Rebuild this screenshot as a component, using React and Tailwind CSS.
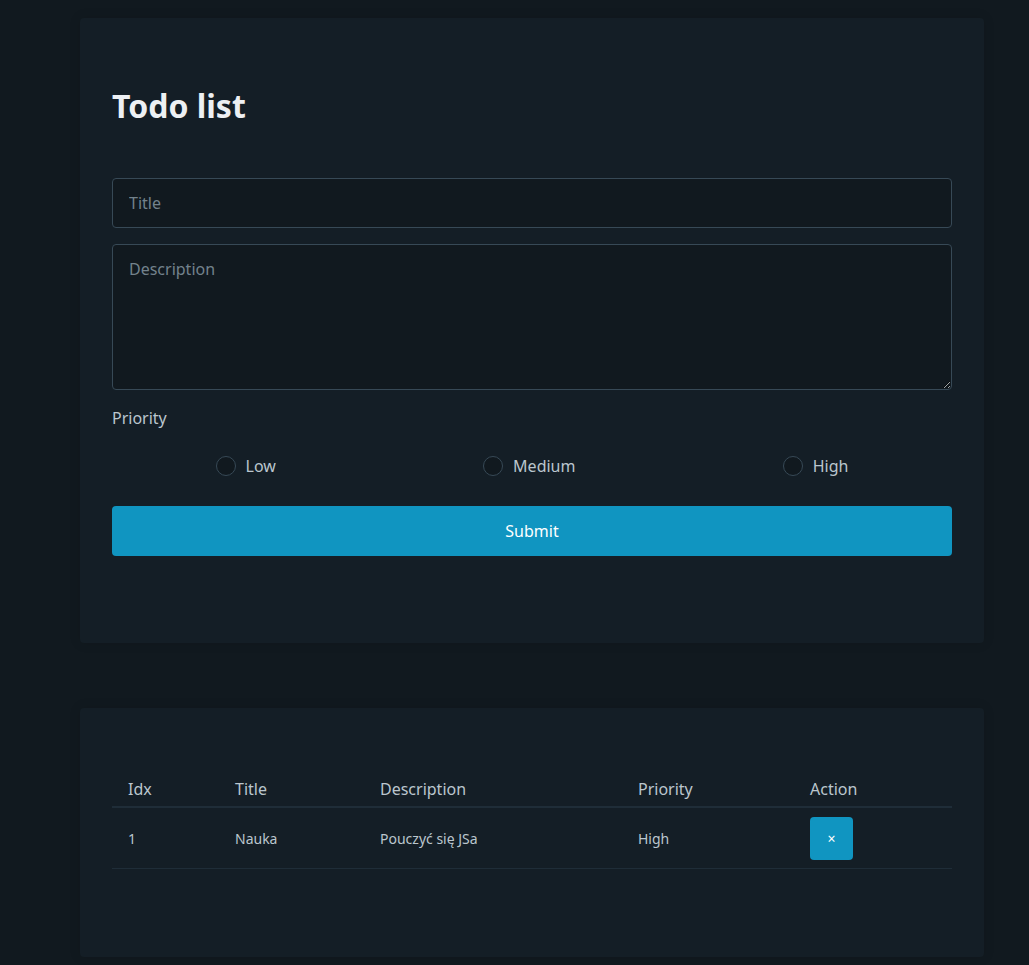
import { useState } from 'react';

const todos = [{ id: 1, title: 'Nauka', description: 'Pouczyć się JSa', priority: 'High' }];

const priorities = ['Low', 'Medium', 'High'];

export default function App() {
  const [priority, setPriority] = useState('');

  return (
    <div
      className="min-h-screen bg-[#11191f] pt-[18px] pb-[9px] text-[#bbc6ce]"
      style={{ fontFamily: '"Noto Sans", "Open Sans", sans-serif' }}
    >
      <main className="ml-[80px] flex w-[904px] flex-col gap-[65px]">
        <article className="rounded bg-[#141e26] px-8 pt-[70px] pb-[87px] shadow-[0_0_12px_rgba(0,0,0,0.12)]">
          <h1 className="text-[32px] font-bold leading-[36px] text-[#edf0f3]">Todo list</h1>
          <form className="mt-[54px] flex flex-col" onSubmit={(e) => e.preventDefault()}>
            <input
              type="text"
              placeholder="Title"
              className="h-[50px] rounded border border-[#374956] bg-[#11191f] px-4 text-base text-[#bbc6ce] outline-none placeholder:text-[#73828c]"
            />
            <textarea
              placeholder="Description"
              className="mt-4 h-[146px] rounded border border-[#374956] bg-[#11191f] px-4 py-3 text-base leading-6 text-[#bbc6ce] outline-none placeholder:text-[#73828c]"
            />
            <label className="mt-4 text-base leading-6">Priority</label>
            <div className="mt-6 flex h-6 items-center justify-around">
              {priorities.map((p) => (
                <label key={p} className="flex items-center gap-[10px] text-base leading-6">
                  <input
                    type="radio"
                    name="priority"
                    checked={priority === p}
                    onChange={() => setPriority(p)}
                    className="h-5 w-5 appearance-none rounded-full border border-[#374956] bg-[#11191f] checked:border-[6px] checked:border-[#1095c1]"
                  />
                  {p}
                </label>
              ))}
            </div>
            <button
              type="submit"
              className="mt-7 h-[50px] rounded bg-[#1095c1] text-base text-white"
            >
              Submit
            </button>
          </form>
        </article>

        <article className="rounded bg-[#141e26] px-8 pt-[61px] pb-[88px] shadow-[0_0_12px_rgba(0,0,0,0.12)]">
          <table className="w-full table-fixed border-collapse text-left">
            <thead>
              <tr className="border-b-2 border-[#1f2d38]">
                <th className="w-[107px] px-4 pt-2 pb-[5px] text-base font-normal leading-6">Idx</th>
                <th className="w-[145px] px-4 pt-2 pb-[5px] text-base font-normal leading-6">Title</th>
                <th className="w-[258px] px-4 pt-2 pb-[5px] text-base font-normal leading-6">Description</th>
                <th className="w-[172px] px-4 pt-2 pb-[5px] text-base font-normal leading-6">Priority</th>
                <th className="px-4 pt-2 pb-[5px] text-base font-normal leading-6">Action</th>
              </tr>
            </thead>
            <tbody>
              {todos.map((t) => (
                <tr key={t.id} className="border-b border-[#1f2d38] text-sm">
                  <td className="px-4 pt-[9px] pb-2">{t.id}</td>
                  <td className="px-4 pt-[9px] pb-2">{t.title}</td>
                  <td className="px-4 pt-[9px] pb-2">{t.description}</td>
                  <td className="px-4 pt-[9px] pb-2">{t.priority}</td>
                  <td className="px-4 pt-[9px] pb-2">
                    <button className="flex h-[43px] w-[43px] items-center justify-center rounded bg-[#1095c1] text-sm text-white">
                      ×
                    </button>
                  </td>
                </tr>
              ))}
            </tbody>
          </table>
        </article>
      </main>
    </div>
  );
}
